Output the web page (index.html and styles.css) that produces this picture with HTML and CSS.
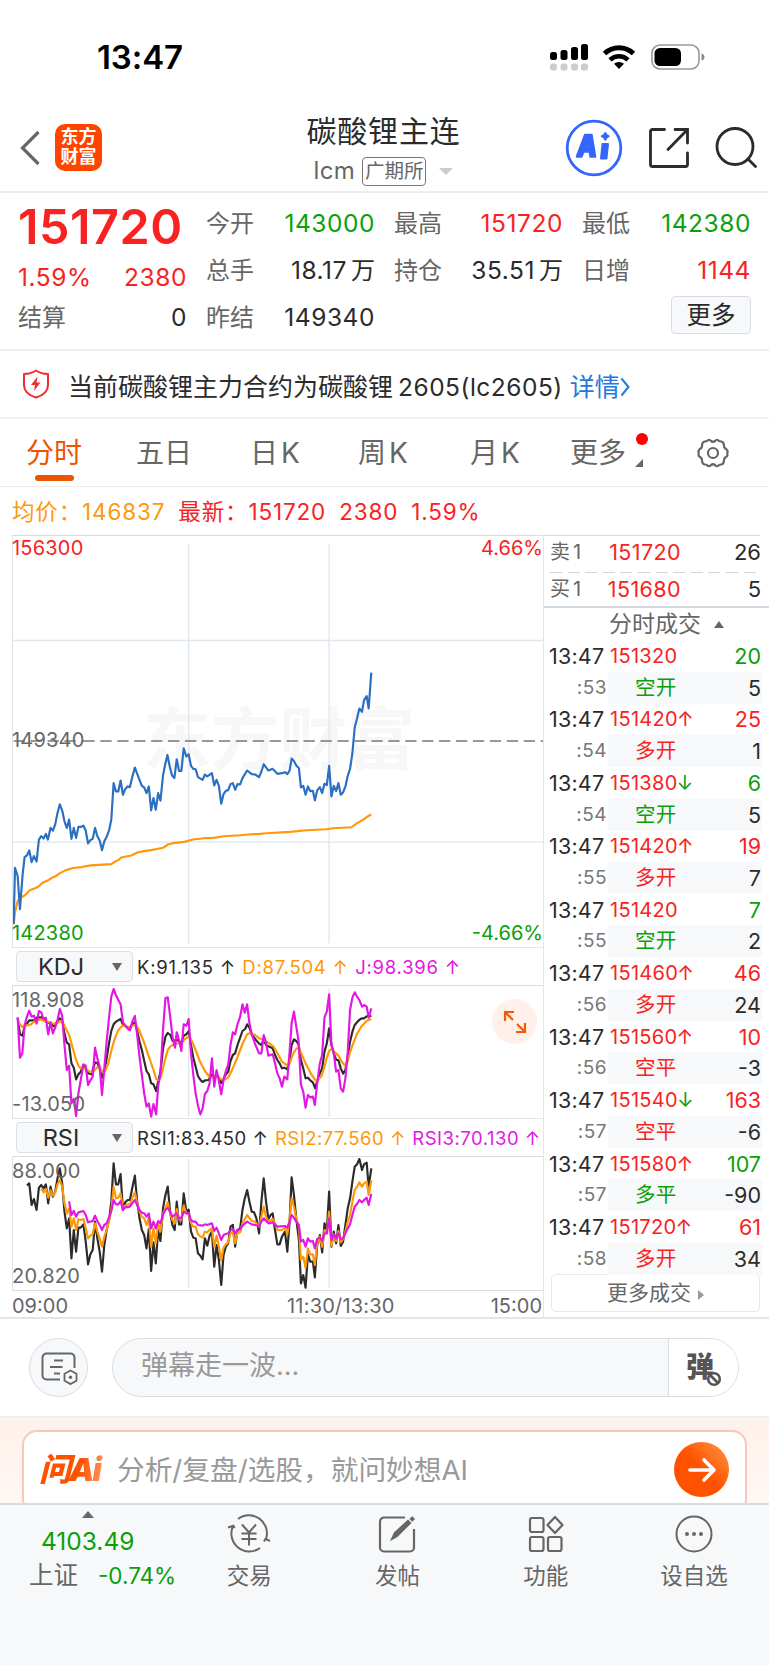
FILE: index.html
```
<!DOCTYPE html>
<html lang="zh-CN">
<head>
    <meta charset="UTF-8">
    <meta name="viewport" content="width=device-width, initial-scale=1.0">
    <title>碳酸锂主连</title>
    <link rel="stylesheet" href="styles.css">
</head>
<body>
    <div class="status-bar">
        <span class="clock">13:47</span>
        <svg class="signal" width="39" height="28" viewBox="0 0 39 28">
            <rect x="0" y="9" width="7" height="8" rx="2.5"/>
            <rect x="10.500" y="7" width="7" height="10" rx="2.500"/>
            <rect x="21" y="4" width="7" height="13" rx="2.500"/>
            <rect x="31" y="1" width="7" height="16" rx="2.500"/>
            <g fill="#ccc">
                <rect x="0" y="20.500" width="7" height="7" rx="2.500"/>
                <rect x="10.500" y="20.500" width="7" height="7" rx="2.500"/>
                <rect x="21" y="20.500" width="7" height="7" rx="2.500"/>
                <rect x="31" y="20.500" width="7" height="7" rx="2.500"/>
            </g>
        </svg>
        <svg class="wifi" width="34" height="26" viewBox="0 0 34 26" fill="none" stroke="#000" stroke-width="5">
            <path d="M2.500 9.500a21 21 0 0 1 29 0"/>
            <path d="M8 15.800a13 13 0 0 1 18 0" stroke-width="4.600"/>
            <path d="M17 25l-5-5.200a7.500 7.500 0 0 1 10 0z" fill="#000" stroke="none"/>
        </svg>
        <svg class="battery" width="54" height="26" viewBox="0 0 54 26">
            <rect x="1" y="1" width="47" height="24" rx="8" fill="none" stroke="#999" stroke-width="1.600"/>
            <rect x="3.500" y="4" width="26.500" height="18" rx="5.500"/>
            <path d="M50.500 9.500q3 1 3 3.500t-3 3.500z" fill="#888"/>
        </svg>
    </div>

    <header class="header">
        <svg class="back" width="22" height="38" viewBox="0 0 22 38" fill="none" stroke="#666" stroke-width="3.200">
            <path d="M18.500 3L2.500 19l16 16"/>
        </svg>
        <div class="logo">东方<br>财富</div>
        <div class="title">
            <h1>碳酸锂主连</h1>
            <div class="subtitle"><span>lcm</span><span class="exchange">广期所</span><i class="arrow-down"></i></div>
        </div>
        <svg class="ai" width="58" height="58" viewBox="0 0 58 58">
            <circle cx="29" cy="29" r="26.800" fill="none" stroke="#3366ff" stroke-width="2.800"/>
            <g fill="#3366ff" stroke="#3366ff" stroke-width="2" stroke-linejoin="round">
                <path fill-rule="evenodd" d="M11.700 37.700L20 15.700h6.700l3.600 22h-5l-.7-5h-6l-2 5zM20.200 28.500h3.400l-.8-6z"/>
                <path d="M37.500 25h5.500l-1.500 14.500h-5.500z"/>
                <path d="M40.300 14q.5 2.500 3.400 3.200q-2.900.8-3.400 3.500q-.6-2.700-3.500-3.500q2.900-.7 3.500-3.200z"/>
            </g>
        </svg>
        <svg class="share" width="42" height="42" viewBox="0 0 42 42" fill="none" stroke="#2b2b2b" stroke-width="2.800" stroke-linecap="round">
            <path d="M16.500 2.500H4.500a2 2 0 0 0-2 2v33a2 2 0 0 0 2 2h33a2 2 0 0 0 2-2V26"/>
            <path d="M27 2.500h12.500V16M39 3L20 22.500"/>
        </svg>
        <svg class="search" width="42" height="42" viewBox="0 0 42 42" fill="none" stroke="#2b2b2b" stroke-width="2.800" stroke-linecap="round">
            <circle cx="20" cy="19.500" r="18"/>
            <path d="M33 32l7.500 7.500"/>
        </svg>
    </header>

    <section class="quote">
        <div class="quote-col">
            <div class="last-price">151720</div>
            <div class="pair red"><span>1.59%</span><span>2380</span></div>
            <div class="pair last"><label>结算</label><span>0</span></div>
        </div>
        <div class="quote-col">
            <div class="pair green"><label>今开</label><span>143000</span></div>
            <div class="pair"><label>总手</label><span>18.17<small>万</small></span></div>
            <div class="pair"><label>昨结</label><span>149340</span></div>
        </div>
        <div class="quote-col">
            <div class="pair red"><label>最高</label><span>151720</span></div>
            <div class="pair"><label>持仓</label><span>35.51<small>万</small></span></div>
        </div>
        <div class="quote-col">
            <div class="pair green"><label>最低</label><span>142380</span></div>
            <div class="pair red"><label>日增</label><span>1144</span></div>
            <button class="more-btn">更多</button>
        </div>
    </section>

    <section class="notice">
        <svg width="28" height="30" viewBox="0 0 28 30" fill="none" stroke="#f22b2b" stroke-width="2">
            <path d="M14 1.500q5 3.500 12 3.500v11q0 9-12 12.500Q2 25 2 16V5q7 0 12-3.500z" stroke-linejoin="round"/>
            <path d="M15.500 7.500L9 16h4l-1 6 6.500-8.500h-4z" fill="#f22b2b" stroke="none"/>
        </svg>
        <span class="notice-text">当前碳酸锂主力合约为碳酸锂<b>2605(lc2605)</b></span>
        <a class="detail">详情</a>
        <svg width="10" height="20" viewBox="0 0 10 20" fill="none" stroke="#2277e0" stroke-width="2"><path d="M1.500 1.500l7 8.500-7 8.500"/></svg>
    </section>

    <nav class="tabs">
        <span class="tab active">分时</span>
        <span class="tab">五日</span>
        <span class="tab">日<b>K</b></span>
        <span class="tab">周<b>K</b></span>
        <span class="tab">月<b>K</b></span>
        <span class="tab tab-more">更多</span>
        <svg class="gear" width="34" height="32" viewBox="0 0 34 32" fill="none" stroke="#666" stroke-width="2.200" stroke-linejoin="round">
            <path d="M11 4q2-2.500 4 0q2 1.500 4 0q2-2.500 4 0l3 .8q2 1 2 4q0 2.500 2.500 3.500q1.500 1.200.8 3.700q.7 2.500-.8 3.700q-2.500 1-2.500 3.500q0 3-2 4l-3 .8q-2 2.500-4 0q-2-1.500-4 0q-2 2.500-4 0l-3-.8q-2-1-2-4q0-2.500-2.500-3.500q-1.500-1.200-.8-3.700q-.7-2.500.8-3.700Q6 11.300 6 8.800q0-3 2-4z"/>
            <circle cx="17" cy="16" r="5"/>
        </svg>
    </nav>

    <div class="legend">
        <span class="orange">均价：146837</span>
        <span class="red">最新：151720</span>
        <span class="red">2380</span>
        <span class="red">1.59%</span>
    </div>

    <main class="board">
        <div class="charts">
            <div class="chart price-chart">
                <div class="watermark">东方财富</div>
                <svg viewBox="36 -315 1596 1239" preserveAspectRatio="none">
                    <g class="grid">
                        <path d="M565-292V913M988-292V913M36 0H1632M36 608H1632"/>
                    </g>
                    <path class="prev-close" d="M38 303H250M248 303H1632"/>
                    <polyline class="line-avg" points="38,855 42,820 50,785 60,775 72,768 87,753 104,746 114,741 124,731 142,723 152,716 164,711 176,702 194,693 217,686 242,683 270,678 332,674 343,667 353,662 362,654 376,651 393,648 410,639 430,635 452,632 488,625 502,615 518,611 552,607 578,600 612,596 640,595 670,590 720,587 755,584 780,583 800,581 870,577 920,572 980,569 1000,566 1055,563 1070,552 1088,542 1100,533 1115,524"/>
                    <polyline class="line-price" points="38,855 42,685 50,710 57,810 65,705 71,653 78,648 85,633 92,668 99,650 107,666 114,600 121,590 128,597 135,583 141,600 149,565 156,573 163,555 170,520 177,494 184,512 191,545 198,565 205,540 212,598 219,565 226,595 233,562 240,562 248,558 255,573 262,612 269,602 276,598 283,565 290,590 297,603 304,632 311,605 318,592 326,570 332,540 339,430 346,455 353,455 360,422 367,465 374,448 381,440 388,442 395,412 403,383 410,402 424,438 431,443 438,460 445,440 452,512 459,475 466,510 473,460 480,483 488,405 495,370 501,345 508,380 515,407 522,415 529,358 536,393 543,393 550,325 558,350 565,343 572,378 579,387 586,388 593,412 607,420 614,404 621,410 635,400 642,437 649,420 656,438 663,492 670,463 677,453 684,451 691,433 698,430 705,450 712,433 720,434 727,415 741,392 755,403 765,404 777,412 784,395 791,373 805,392 818,387 832,402 846,400 855,397 862,403 869,392 875,356 882,363 889,377 897,385 903,443 910,438 917,465 924,440 931,454 939,453 945,482 952,452 960,442 967,460 974,432 981,436 988,378 995,470 1002,438 1009,454 1016,430 1023,465 1030,458 1037,440 1044,408 1051,387 1058,340 1065,262 1072,235 1079,205 1087,215 1093,180 1101,168 1107,205 1115,97"/>
                </svg>
                <span class="mark top red">156300</span>
                <span class="mark top right red">4.66%</span>
                <span class="mark mid">149340</span>
                <span class="mark bottom green">142380</span>
                <span class="mark bottom right green">-4.66%</span>
            </div>

            <div class="indicator-bar kdj-bar">
                <div class="select"><span>KDJ</span><i></i></div>
                <span class="black">K:91.135 ↑</span>
                <span class="orange">D:87.504 ↑</span>
                <span class="purple">J:98.396 ↑</span>
            </div>
            <div class="chart kdj-chart">
                <svg viewBox="36 123 1596 396" preserveAspectRatio="none">
                    <g class="grid"><path d="M565 129V516M988 129V516"/></g>
                    <polyline class="line-black" points="50,218 57,268 64,272 71,245 85,226 99,226 107,218 121,217 135,230 149,236 160,244 170,228 177,220 184,225 191,265 198,293 205,298 212,355 219,368 226,403 233,388 240,380 248,360 262,385 272,388 283,352 290,354 297,370 304,398 311,380 318,340 326,290 332,258 339,238 346,230 360,222 367,238 381,248 388,252 395,238 403,232 410,258 417,290 424,315 431,347 438,378 445,388 452,415 459,418 467,438 473,410 480,380 488,310 495,275 502,264 510,270 517,288 529,284 543,294 550,272 558,268 565,258 572,300 579,338 586,365 593,393 600,404 607,411 614,406 625,405 635,388 642,398 649,390 656,398 663,414 670,402 677,388 684,380 691,348 698,330 705,325 712,300 720,278 727,258 735,252 741,238 748,248 755,268 765,282 777,296 784,300 791,283 798,300 805,304 818,310 825,330 832,345 839,355 846,370 853,368 862,373 869,345 875,300 882,283 889,288 896,298 903,345 910,370 917,400 924,398 931,406 939,412 946,430 952,408 960,385 967,370 974,320 981,295 988,250 995,300 1002,325 1009,344 1016,346 1023,370 1030,386 1037,375 1044,335 1051,290 1058,260 1065,240 1072,232 1079,224 1087,220 1093,220 1101,214 1115,213"/>
                    <polyline class="line-orange" points="50,222 57,238 64,246 75,242 90,238 104,226 121,223 135,230 149,233 163,237 177,230 184,228 191,242 198,256 205,269 212,295 226,345 233,362 240,370 248,368 258,374 270,382 280,378 290,366 297,370 307,380 315,375 322,358 332,318 339,292 346,272 353,256 360,247 367,242 385,246 403,240 410,245 417,258 431,293 445,335 459,375 467,402 474,406 480,400 488,370 495,340 502,315 510,304 522,297 543,294 552,284 565,274 572,283 579,298 586,315 600,352 614,378 628,396 640,397 654,395 663,403 672,404 684,398 698,370 712,336 727,297 741,268 750,264 765,270 777,280 791,286 805,293 820,304 832,324 846,350 862,362 869,356 875,338 882,322 889,312 896,307 903,322 917,355 931,382 945,404 952,408 965,393 974,365 981,338 988,318 995,312 1005,322 1016,332 1027,352 1037,363 1044,350 1051,322 1058,302 1065,285 1072,266 1079,255 1087,242 1093,236 1101,227 1115,222"/>
                    <polyline class="line-purple" points="50,218 57,338 64,325 71,240 78,215 85,197 92,215 99,212 107,236 114,198 121,202 128,222 135,218 142,268 149,232 156,265 163,248 170,225 177,192 184,212 191,300 198,375 205,362 212,475 219,462 226,513 233,445 240,405 248,358 255,362 262,420 269,406 276,395 283,308 290,340 297,365 304,450 311,370 318,290 326,210 332,155 339,132 346,150 353,165 360,178 367,232 381,250 388,256 395,230 403,213 410,270 417,335 424,390 431,445 438,485 445,475 452,515 459,477 467,508 473,425 480,385 488,250 495,160 502,157 510,220 517,280 524,308 529,262 536,285 543,318 550,238 558,242 565,222 572,325 579,390 586,445 593,482 600,508 607,490 614,447 621,438 628,415 635,340 642,425 649,375 656,408 663,448 670,405 677,378 684,360 691,300 698,262 705,268 712,238 720,215 727,178 734,203 741,178 748,235 755,268 765,297 777,325 784,325 791,270 798,292 805,332 818,328 825,355 832,385 839,400 846,425 853,395 862,403 869,320 875,235 882,200 889,245 896,288 903,418 910,440 917,488 924,450 931,457 939,455 945,480 952,415 960,355 967,330 974,217 981,200 988,148 995,300 1002,325 1009,380 1016,375 1023,430 1030,440 1037,400 1044,320 1051,195 1058,158 1065,142 1072,155 1079,165 1087,185 1093,180 1101,185 1107,218 1115,190"/>
                </svg>
                <span class="mark k-top">118.908</span>
                <span class="mark k-bottom">-13.050</span>
                <div class="expand">
                    <svg width="24" height="24" viewBox="0 0 24 24" fill="none" stroke="#f05a0a" stroke-width="2.200">
                        <path d="M2 11V2h9M2.500 2.500l7.500 7.500M22 13v9h-9M21.500 21.500L14 14"/>
                    </svg>
                </div>
            </div>

            <div class="indicator-bar">
                <div class="select"><span>RSI</span><i></i></div>
                <span class="black">RSI1:83.450 ↑</span>
                <span class="orange">RSI2:77.560 ↑</span>
                <span class="purple">RSI3:70.130 ↑</span>
            </div>
            <div class="chart rsi-chart">
                <svg viewBox="36 126 1596 399" preserveAspectRatio="none">
                    <g class="grid"><path d="M565 132V519M988 132V519"/></g>
                    <polyline class="line-black" points="78,211 85,205 92,270 99,252 107,285 114,218 121,210 128,220 135,208 142,265 149,215 156,245 163,230 170,190 177,160 184,205 191,290 198,340 205,310 212,430 219,345 226,410 233,338 240,338 248,328 255,380 262,448 269,418 276,405 283,320 290,370 297,410 304,470 311,390 318,345 326,310 332,260 339,145 346,208 353,208 360,177 367,285 374,262 381,255 388,255 395,220 403,182 410,260 417,310 424,345 431,360 438,400 445,342 452,468 459,382 466,445 473,345 480,378 488,278 495,240 502,215 509,290 516,330 523,345 529,260 536,328 543,328 550,235 558,290 565,284 572,350 579,368 586,370 593,415 600,422 607,433 614,370 621,392 628,362 635,350 642,455 649,390 656,435 663,510 670,420 677,395 684,385 691,335 698,330 705,395 712,345 720,340 727,285 734,250 741,225 748,260 755,290 762,292 769,310 777,355 784,260 791,190 798,260 805,312 812,300 818,295 825,345 832,388 839,388 846,365 855,350 862,410 869,320 875,187 882,240 889,310 897,375 903,505 910,480 917,518 924,418 931,440 939,440 945,487 952,390 960,360 967,412 974,325 981,345 988,230 995,395 1002,350 1009,385 1016,330 1023,393 1030,380 1037,330 1044,280 1051,250 1058,200 1065,155 1072,148 1079,132 1087,165 1093,148 1101,143 1107,215 1115,160"/>
                    <polyline class="line-orange" points="121,221 128,232 135,222 142,248 149,226 156,242 163,232 170,208 177,195 184,215 191,265 198,295 205,280 212,335 219,310 226,345 233,313 240,315 248,312 255,340 262,370 269,362 276,358 283,325 290,350 297,370 304,395 311,365 318,345 326,315 332,285 339,215 346,250 353,248 360,235 367,282 374,272 381,268 388,268 395,250 403,232 410,265 417,290 424,305 431,310 438,330 445,308 452,395 459,340 466,385 473,325 480,350 488,295 495,278 502,262 509,295 516,315 523,325 529,282 536,312 543,315 550,272 558,295 565,295 572,325 579,335 586,335 593,358 600,364 607,368 614,350 621,352 628,345 635,340 642,395 649,362 656,395 663,437 670,398 677,388 684,382 691,355 698,352 705,385 712,355 720,352 727,325 741,300 755,318 765,320 777,335 784,305 791,275 798,305 805,320 818,312 825,325 832,345 846,345 855,338 862,358 869,310 875,250 882,275 889,310 897,335 903,435 910,425 917,458 924,400 931,418 939,418 945,450 952,385 960,365 967,395 974,345 981,355 988,290 995,393 1002,358 1009,378 1016,348 1023,382 1030,372 1037,350 1044,320 1051,300 1058,260 1065,225 1072,215 1079,202 1087,215 1093,205 1101,200 1107,240 1115,195"/>
                    <polyline class="line-purple" points="205,259 212,300 219,288 226,305 233,292 248,288 255,300 262,322 276,318 283,302 290,318 297,330 304,345 311,330 318,325 326,305 332,288 339,255 346,268 353,268 360,258 367,285 374,277 388,275 395,265 403,255 410,270 417,285 424,293 431,295 438,305 445,295 452,340 459,320 466,340 473,318 480,325 488,298 495,285 502,278 509,290 516,305 529,295 536,310 543,310 550,290 558,295 565,295 572,315 579,320 586,320 593,330 607,332 614,328 621,330 635,325 642,348 649,338 656,355 663,375 670,360 677,357 684,355 691,345 698,342 705,355 712,345 720,343 727,332 741,320 755,328 765,330 777,333 784,320 791,310 805,325 818,322 832,335 855,333 862,338 869,320 875,300 882,308 889,320 897,330 903,380 910,375 917,395 924,370 931,380 939,378 945,400 952,372 960,368 967,378 974,355 981,355 988,310 995,375 1002,358 1009,370 1016,355 1023,373 1030,370 1037,355 1044,340 1051,328 1058,300 1065,275 1072,267 1079,255 1087,262 1093,255 1101,248 1107,270 1115,237"/>
                </svg>
                <span class="mark k-top">88.000</span>
                <span class="mark k-bottom">20.820</span>
            </div>
            <div class="time-axis"><span>09:00</span><span>11:30/13:30</span><span>15:00</span></div>
        </div>

        <aside class="trades">
            <div class="book">
                <div class="book-row"><label>卖1</label><span class="red">151720</span><span>26</span></div>
                <div class="book-row"><label>买1</label><span class="red">151680</span><span>5</span></div>
            </div>
            <div class="trades-title">分时成交<i></i></div>
            <div class="tick"><time>13:47</time><span class="red">151320</span><b class="green">20</b></div>
            <div class="tick sub"><time>:53</time><span class="green">空开</span><b>5</b></div>
            <div class="tick"><time>13:47</time><span class="red">151420<em>↑</em></span><b class="red">25</b></div>
            <div class="tick sub"><time>:54</time><span class="red">多开</span><b>1</b></div>
            <div class="tick"><time>13:47</time><span class="red">151380<em class="green">↓</em></span><b class="green">6</b></div>
            <div class="tick sub"><time>:54</time><span class="green">空开</span><b>5</b></div>
            <div class="tick"><time>13:47</time><span class="red">151420<em>↑</em></span><b class="red">19</b></div>
            <div class="tick sub"><time>:55</time><span class="red">多开</span><b>7</b></div>
            <div class="tick"><time>13:47</time><span class="red">151420</span><b class="green">7</b></div>
            <div class="tick sub"><time>:55</time><span class="green">空开</span><b>2</b></div>
            <div class="tick"><time>13:47</time><span class="red">151460<em>↑</em></span><b class="red">46</b></div>
            <div class="tick sub"><time>:56</time><span class="red">多开</span><b>24</b></div>
            <div class="tick"><time>13:47</time><span class="red">151560<em>↑</em></span><b class="red">10</b></div>
            <div class="tick sub"><time>:56</time><span class="red">空平</span><b>-3</b></div>
            <div class="tick"><time>13:47</time><span class="red">151540<em class="green">↓</em></span><b class="red">163</b></div>
            <div class="tick sub"><time>:57</time><span class="red">空平</span><b>-6</b></div>
            <div class="tick"><time>13:47</time><span class="red">151580<em>↑</em></span><b class="green">107</b></div>
            <div class="tick sub"><time>:57</time><span class="green">多平</span><b>-90</b></div>
            <div class="tick"><time>13:47</time><span class="red">151720<em>↑</em></span><b class="red">61</b></div>
            <div class="tick sub"><time>:58</time><span class="red">多开</span><b>34</b></div>
            <button class="more-trades">更多成交<i></i></button>
        </aside>
    </main>

    <section class="comment">
        <div class="comment-set">
            <svg width="38" height="34" viewBox="0 0 38 34" fill="none" stroke="#666" stroke-width="2">
                <path d="M20 28.500H6.500a4 4 0 0 1-4-4v-18a4 4 0 0 1 4-4h24a4 4 0 0 1 4 4V17"/>
                <path d="M14 9.500h9M10 16h12.500M14 22.500h6"/>
                <path d="M30.500 19.500l6 3.300v7l-6 3.300-6-3.300v-7z" stroke-width="1.800"/>
                <circle cx="30.500" cy="26.300" r="1.700" fill="#666" stroke="none"/>
            </svg>
        </div>
        <div class="comment-input">
            <span>弹幕走一波...</span>
            <div class="danmu">弹
                <svg width="16" height="16" viewBox="0 0 16 16" fill="#fff" stroke="#555" stroke-width="2.600"><circle cx="8" cy="8" r="5.800"/><path d="M4 4l8 8"/></svg>
            </div>
        </div>
    </section>

    <section class="ask">
        <div class="ask-box">
            <span class="ask-logo">问Ai</span>
            <span class="ask-text">分析/复盘/选股，就问妙想AI</span>
            <div class="go">
                <svg width="30" height="26" viewBox="0 0 30 26" fill="none" stroke="#fff" stroke-width="3.600" stroke-linecap="round" stroke-linejoin="round"><path d="M3 13h24M17 3l10 10-10 10"/></svg>
            </div>
        </div>
    </section>

    <footer class="bottom-nav">
        <div class="index">
            <i></i>
            <div class="index-value green">4103.49</div>
            <div class="index-row"><span>上证</span><span class="green">-0.74%</span></div>
        </div>
        <div class="nav-item">
            <svg width="44" height="40" viewBox="0 0 44 40" fill="none" stroke="#666" stroke-width="2">
                <path d="M11 5A18 18 0 0 1 39 25M33 34A18 18 0 0 1 6 12"/>
                <path d="M1 13.500l5.500-1.800 1 2.500M37 27.500l1.500-2.700 4.500 2.200" stroke-linejoin="round"/>
                <path d="M15 10.500l7 8 7-8M22 18.500v13M14.500 19.500h15M14.500 25h15"/>
            </svg>
            <span>交易</span>
        </div>
        <div class="nav-item">
            <svg width="44" height="40" viewBox="0 0 44 40" fill="none" stroke="#666" stroke-width="2.200">
                <path d="M30 3.500H9a4 4 0 0 0-4 4v26a4 4 0 0 0 4 4h26a4 4 0 0 0 4-4V15"/>
                <path d="M16.500 25.500l3-6.500L33 6.500l2.500 2.500L22 22.500zM35.500 5l1.700-1.700 1.800 1.800-1.700 1.600z" fill="#666" stroke-width="1.500"/>
            </svg>
            <span>发帖</span>
        </div>
        <div class="nav-item">
            <svg width="44" height="40" viewBox="0 0 44 40" fill="none" stroke="#666" stroke-width="2.200" stroke-linejoin="round">
                <rect x="6" y="4" width="13.500" height="14" rx="2"/>
                <path d="M31 3l7.500 8L31 19l-7.500-8z"/>
                <rect x="6" y="23" width="13.500" height="14" rx="2"/>
                <rect x="24" y="23" width="13.500" height="14" rx="2"/>
            </svg>
            <span>功能</span>
        </div>
        <div class="nav-item">
            <svg width="44" height="40" viewBox="0 0 44 40" fill="none" stroke="#666" stroke-width="2">
                <circle cx="22" cy="20" r="17.500"/>
                <g fill="#666" stroke="none"><circle cx="15" cy="20" r="2"/><circle cx="22" cy="20" r="2"/><circle cx="29" cy="20" r="2"/></g>
            </svg>
            <span>设自选</span>
        </div>
    </footer>
</body>
</html>
```
FILE: styles.css
```
* { box-sizing: border-box; }
body {
    margin: 0;
    width: 769px;
    height: 1665px;
    overflow: hidden;
    background: #fff;
    color: #2b2b2b;
    font-family: Inter, "Noto Sans CJK SC", sans-serif;
    font-size: 24px;
    line-height: 1;
}
svg { display: block; flex-shrink: 0; }
i, em { font-style: normal; }
b { font-weight: 400; }
button { font-family: inherit; padding: 0; }

.red { color: #f82222; }
.green { color: #0aa00a; }
.orange { color: #ff9808; }
.purple { color: #e316e3; }
.black { color: #2b2b2b; }

/* status bar */
.status-bar {
    display: flex;
    align-items: center;
    height: 100px;
    padding: 14px 64px 0 97px;
}
.clock { margin-top: 1px; font-size: 33px; font-weight: 600; color: #000; letter-spacing: -0.1px; }
.signal { margin-left: auto; }
.wifi { margin-left: 13px; }
.battery { margin-left: 15px; }

/* header */
.header {
    display: flex;
    align-items: center;
    height: 93px;
    padding: 4px 12px 0 20px;
    border-bottom: 2px solid #eee;
}
.logo {
    width: 47px;
    height: 47px;
    margin-left: 13px;
    padding-top: 3px;
    border-radius: 10px;
    background: #ff4400;
    color: #fff;
    font-size: 18px;
    font-weight: 700;
    line-height: 20px;
    text-align: center;
}
.title {
    flex: 1;
    display: flex;
    flex-direction: column;
    align-items: center;
    padding: 7px 0 0 100px;
}
.title h1 { margin: 0; font-size: 30px; font-weight: 400; line-height: 40px; letter-spacing: 0.8px; }
.subtitle { display: flex; align-items: center; color: #666; height: 40px; letter-spacing: 0.3px; }
.exchange {
    height: 29px;
    margin: 0 13px 0 7px;
    padding: 0 2px;
    border: 1.5px solid #777;
    border-radius: 4px;
    font-size: 19.5px;
    line-height: 27px;
    letter-spacing: 0;
}
.arrow-down { border: 7px solid transparent; border-top-color: #ccc; border-bottom: 0; }
.share { margin-left: 25px; }
.search { margin-left: 25px; }

/* quote */
.quote {
    display: grid;
    grid-template-columns: repeat(4, 168px);
    column-gap: 20px;
    height: 158px;
    padding: 7px 18px 0;
    border-bottom: 2px solid #eee;
}
.quote-col { display: flex; flex-direction: column; align-items: stretch; }
.pair { display: flex; justify-content: space-between; height: 47px; line-height: 47px; font-size: 24.5px; }
.pair label { color: #666; font-size: 24px; }
.pair span { margin-right: -1px; letter-spacing: 0.55px; }
.pair small { margin-left: 4px; font-size: 24px; letter-spacing: 0; }
.last-price { height: 53px; color: #f82222; font-size: 48.5px; font-weight: 600; line-height: 54px; letter-spacing: 0.5px; }
.last-price + .pair { height: 48px; line-height: 48px; }
.pair.last { height: 34px; line-height: 33px; }
.more-btn {
    align-self: flex-end;
    width: 80px;
    height: 38px;
    margin: 2px -1px 0 0;
    border: 1.5px solid #d9dce4;
    border-radius: 4px;
    background: #f7f8fa;
    color: #2b2b2b;
    font-size: 24.5px;
    line-height: 36px;
}

/* notice */
.notice { display: flex; align-items: center; height: 68px; padding: 6px 22px 0; border-bottom: 2px solid #f3f3f3; }
.notice svg { margin-top: -6px; }
.notice svg:last-child { margin: 0; }
.notice-text { margin: 0 7px 0 18px; font-size: 25px; white-space: nowrap; }
.notice-text b { margin-left: 5px; font-size: 24.5px; letter-spacing: 0.5px; }
.detail { color: #2277e0; font-size: 25px; }

/* tabs */
.tabs {
    display: grid;
    grid-template-columns: 110px 114px 108px 112px 100px 1fr auto;
    align-items: center;
    height: 68px;
    padding: 0 39px 0 26px;
    border-bottom: 1px solid #eee;
    color: #666;
    font-size: 28px;
}
.tab { position: relative; justify-self: start; white-space: nowrap; }
.tab b { margin-left: 3px; }
.tab.active { color: #ea5504; }
.tab.active::after {
    content: "";
    position: absolute;
    left: 9px;
    bottom: -14px;
    width: 39px;
    height: 6px;
    border-radius: 3px;
    background: #ea5504;
}
.tab-more::before {
    content: "";
    position: absolute;
    right: -22px;
    top: -6px;
    width: 12px;
    height: 12px;
    border-radius: 50%;
    background: #f00;
}
.tab-more::after {
    content: "";
    position: absolute;
    right: -17px;
    bottom: 0;
    border-left: 8px solid transparent;
    border-bottom: 8px solid #666;
}

.legend { display: flex; height: 48px; padding-left: 12px; line-height: 50px; font-size: 22.5px; letter-spacing: 0.85px; }
.legend span { margin-right: 13px; }

/* board */
.board { display: flex; height: 784px; border-bottom: 2px solid #e2e5ea; }
.charts { width: 544px; padding-left: 12px; border-right: 1.5px solid #e2e5ea; }
.chart { position: relative; border-left: 1px solid #dfe3e8; border-top: 1.5px solid #d8dbe0; }
.chart svg { position: relative; width: 100%; height: 100%; }
.chart .expand svg { width: 24px; height: 24px; }
.price-chart { height: 413px; border-bottom: 1.5px solid #e2e5ea; }
.kdj-chart { height: 134px; border-bottom: 1.5px solid #e2e5ea; }
.rsi-chart { height: 135px; border-bottom: 1.5px solid #d8dbe0; }
.grid { fill: none; stroke: #e0e6ee; stroke-width: 4; }
.chart polyline { fill: none; stroke-width: 6.5; stroke-linejoin: round; }
.prev-close { fill: none; stroke: #777; stroke-width: 4; stroke-dasharray: 34 17; }
.line-price { stroke: #2b6fc2; }
.line-avg, .line-orange { stroke: #ff9808; }
.line-black { stroke: #2b2b2b; }
.line-purple { stroke: #e316e3; }
.watermark {
    position: absolute;
    left: 130px;
    top: 158px;
    color: #f7f7f7;
    font-size: 68px;
    font-weight: 700;
    line-height: 90px;
}
.mark { position: absolute; left: -1px; color: #666; font-size: 20px; line-height: 22px; letter-spacing: 0.2px; }
.mark.red { color: #f82222; }
.mark.green { color: #0aa00a; }
.mark.top { top: 1px; }
.mark.mid { top: 193px; }
.mark.bottom { bottom: 3px; }
.mark.right { left: auto; right: 0; letter-spacing: 0; }
.mark.k-top { top: 3px; }
.mark.k-bottom { bottom: 3px; }
.expand {
    position: absolute;
    right: 6px;
    top: 13px;
    display: flex;
    align-items: center;
    justify-content: center;
    width: 45px;
    height: 45px;
    border-radius: 50%;
    background: #fff0e9;
}
.indicator-bar {
    display: flex;
    align-items: center;
    height: 37px;
    padding-left: 4px;
    font-size: 18.5px;
    letter-spacing: 0.5px;
    white-space: nowrap;
}
.indicator-bar > span { margin: 1px 6.5px 0 0; }
.kdj-bar { letter-spacing: 0.75px; }
.select {
    display: flex;
    flex-shrink: 0;
    align-items: center;
    justify-content: space-between;
    width: 117px;
    height: 31px;
    margin-right: 4px;
    padding: 0 10px 0 0;
    border: 1.5px solid #dcdfe5;
    border-radius: 4px;
    background: #f7f8fa;
    font-size: 23.5px;
    letter-spacing: 0;
}
.select span { width: 88px; text-align: center; }
.select i { border: 5px solid transparent; border-top: 8px solid #666; border-bottom: 0; }
.time-axis { display: flex; color: #666; font-size: 20px; line-height: 31px; padding-right: 1px; }
.time-axis span:first-child { width: 275px; }
.time-axis span:nth-child(2) { letter-spacing: 0.2px; }
.time-axis span:last-child { margin-left: auto; }

/* trades */
.trades { width: 225px; }
.book { height: 71px; margin-right: 9px; border-top: 1.5px solid #d8dbe0; }
.book-row {
    display: grid;
    grid-template-columns: 54px 77px 1fr;
    height: 37px;
    margin-left: 6px;
    font-size: 22px;
    line-height: 33px;
}
.book-row:first-child {
    background: repeating-linear-gradient(90deg, #cfd4da 0 12px, transparent 12px 17.6px) left bottom / 100% 1.5px no-repeat;
}
.book-row label { color: #666; font-size: 20px; letter-spacing: 3px; }
.book-row span:nth-child(2) { text-align: right; font-size: 21.5px; letter-spacing: 0.4px; }
.book-row span:last-child { margin-right: -1px; text-align: right; }
.trades-title {
    display: flex;
    align-items: center;
    height: 34px;
    padding-left: 65px;
    border-top: 2px solid #d3d8e0;
    color: #666;
    font-size: 23px;
    line-height: 32px;
}
.trades-title i { margin-left: 13px; border: 5px solid transparent; border-bottom: 7px solid #666; border-top: 0; }
.tick {
    display: grid;
    grid-template-columns: 58px 1fr 60px;
    column-gap: 3px;
    height: 31.73px;
    padding: 0 8px 0 5px;
    line-height: 32px;
    font-size: 21.5px;
}
.tick time { white-space: nowrap; letter-spacing: 0.2px; }
.tick span { font-size: 20px; letter-spacing: 0.3px; white-space: nowrap; }
.tick em { display: inline-block; width: 14px; font-size: 20px; text-indent: -1px; }
.tick b { text-align: right; }
.tick.sub { padding-right: 7px; column-gap: 0; grid-template-columns: 59px 98px 1fr; }
.tick.sub time { padding-right: 1px; color: #777; font-size: 19px; text-align: right; letter-spacing: 0.5px; }
.tick.sub span { padding-left: 27px; font-size: 20.5px; background: #f7f8fa; }
.tick.sub b { padding-right: 1px; background: #f7f8fa; }
.more-trades {
    display: block;
    width: 209px;
    height: 38px;
    margin-left: 7px;
    border: 1.5px solid #e6e8ec;
    border-radius: 5px;
    background: #fff;
    color: #666;
    font-size: 21px;
    line-height: 34px;
}
.more-trades i { display: inline-block; margin-left: 7px; border: 5.5px solid transparent; border-left: 6px solid #999; border-right: 0; }

/* comment */
.comment { display: flex; align-items: center; height: 97px; padding: 0 30px 0 29px; }
.comment-set {
    display: flex;
    align-items: center;
    justify-content: center;
    width: 59px;
    height: 59px;
    border: 1.5px solid #dadce4;
    border-radius: 50%;
    background: #f7f8fa;
}
.comment-input {
    flex: 1;
    display: flex;
    justify-content: space-between;
    height: 59px;
    margin-left: 24px;
    padding-left: 28px;
    overflow: hidden;
    border: 1.5px solid #dadce4;
    border-radius: 30px;
    background: #f7f8fa;
    color: #999;
    font-size: 27px;
    line-height: 53px;
}
.danmu { position: relative; width: 70px; padding-left: 17px; border-left: 1.5px solid #dadce4; background: #fff; color: #555; font-size: 28px; font-weight: 900; line-height: 56px; }
.danmu svg { position: absolute; left: 37px; top: 32px; }

/* ask ai */
.ask { height: 87px; padding: 13px 22px 0; overflow: hidden; border-top: 1px solid #eee; background: linear-gradient(#fff1ec, #fff8f2); }
.ask-box {
    display: flex;
    align-items: center;
    height: 84px;
    padding: 0 16px 5px 15px;
    border: 2px solid #fbc5bb;
    border-bottom-color: #e0e0f2;
    border-radius: 15px;
    background: #fff;
}
.ask-logo {
    padding-right: 5px;
    color: transparent;
    background: linear-gradient(100deg, #ff5200 60%, #ffa070);
    background-clip: text;
    -webkit-background-clip: text;
    font-size: 32px;
    font-weight: 900;
    font-style: italic;
    line-height: 40px;
    letter-spacing: -2px;
}
.ask-text { margin: 2px 0 0 12px; color: #999; font-size: 27.7px; }
.go {
    display: flex;
    align-items: center;
    justify-content: center;
    width: 55px;
    height: 55px;
    margin-left: auto;
    border-radius: 50%;
    background: linear-gradient(45deg, #ff5200 50%, #ff9a4a);
}

/* bottom nav */
.bottom-nav { display: flex; height: 162px; border-top: 2px solid #d9dce2; background: #f7f8fa; color: #666; }
.index { width: 175px; white-space: nowrap; }
.index i { display: block; width: 12px; margin: 6px 0 0 82px; border: 6.5px solid transparent; border-bottom: 7px solid #666; border-top: 0; }
.index-value { padding-left: 41px; margin-top: 11px; font-size: 24.5px; line-height: 25px; }
.index-row { display: flex; padding-left: 29px; line-height: 43px; font-size: 24.5px; }
.index-row .green { margin-left: 20px; font-size: 22.5px; }
.nav-item { display: flex; flex-direction: column; align-items: center; width: 148.3px; padding-top: 9px; font-size: 22.5px; }
.nav-item span { margin-top: 9px; line-height: 26px; }
```
